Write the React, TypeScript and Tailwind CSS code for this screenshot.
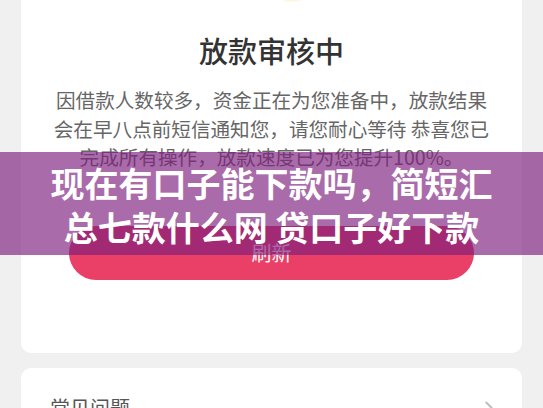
import React from "react";
import { ChevronRight } from "lucide-react";

const cjk = { fontFamily: '"Noto Sans CJK SC", "Noto Sans", sans-serif' };

export default function App() {
  return (
    <div className="relative w-[543px] h-[408px] overflow-hidden bg-[#f0f0f0]" style={cjk}>
      <div className="px-[21px]">
        {/* Status card, its top runs off the screen */}
        <div className="-mt-[70px] bg-white rounded-[10px] flex flex-col items-center pb-[73px]">
          <div className="w-[64px] h-[72px] rounded-full bg-[#fdf8e4] ml-[40px]" />
          <h1 className="mt-[30px] text-[29px] leading-[36px] font-medium text-[#333]">
            放款审核中
          </h1>
          <p className="mt-[18px] px-[26px] text-center text-[19.6px] leading-[28.5px] text-[#666]">
            因借款人数较多，资金正在为您准备中，放款结果会在早八点前短信通知您，请您耐心等待 恭喜您已完成所有操作，放款速度已为您提升100%。
          </p>
          <button className="mt-[54px] w-[405px] h-[54px] rounded-full bg-[#ea4068] text-white text-[20px]">
            刷新
          </button>
        </div>

        {/* FAQ card */}
        <div className="mt-[15px] bg-white rounded-[10px] flex items-center justify-between pl-[29px] pr-[22px] pt-[26px] pb-[20px]">
          <span className="text-[20px] leading-[28px] text-[#555]">常见问题</span>
          <ChevronRight className="w-[22px] h-[22px] text-[#bbb]" strokeWidth={2} />
        </div>
      </div>

      {/* Headline banner overlaid on the page */}
      <div className="absolute left-0 top-[152px] w-full h-[103px] bg-[rgba(124,31,124,0.66)] flex flex-col items-center justify-center pt-[2px]">
        <div className="text-white font-bold text-[34px] leading-[44px] text-center">
          现在有口子能下款吗，简短汇
        </div>
        <div className="text-white font-bold text-[34px] leading-[44px] text-center">
          总七款什么网 贷口子好下款
        </div>
      </div>
    </div>
  );
}
